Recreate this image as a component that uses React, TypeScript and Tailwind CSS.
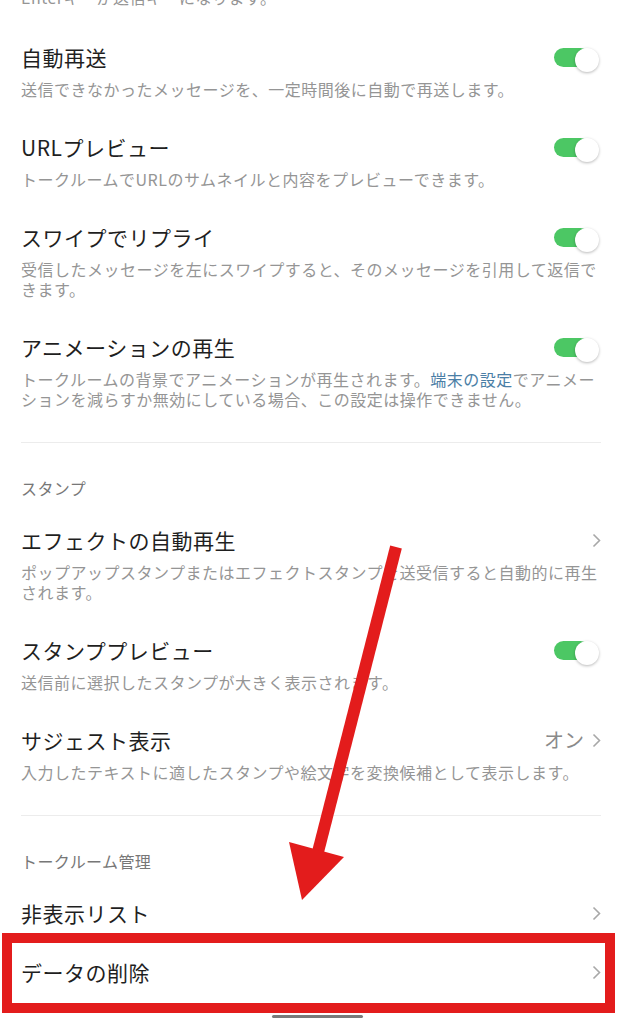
import React from "react";

function Toggle() {
  return (
    <div className="flex items-start h-[28px] mr-[2px] shrink-0">
      <div className="mt-[5px] w-[36px] h-[19px] rounded-full bg-[#4cc764]" />
      <div className="-ml-[15px] mt-[5px] w-[24px] h-[24px] rounded-full bg-white shadow-[0_1px_3px_rgba(0,0,0,0.28)]" />
    </div>
  );
}

function Chevron() {
  return (
    <svg width="9" height="15" viewBox="0 0 9 15" className="shrink-0">
      <polyline points="1.5,1.5 7.5,7.5 1.5,13.5" fill="none" stroke="#a8a8a8" strokeWidth="1.6" />
    </svg>
  );
}

function Item({
  title,
  right,
  children,
}: {
  title: string;
  right?: React.ReactNode;
  children?: React.ReactNode;
}) {
  return (
    <div className={children ? "pt-[17px] pb-[17px]" : "pt-[17px] pb-[14px]"}>
      <div className="flex items-center justify-between">
        <div className="text-[21px] leading-[28px] tracking-[0.5px] text-[#1f1f1f]">{title}</div>
        {right}
      </div>
      {children && (
        <div className="mt-[8px] text-[16px] leading-[20px] tracking-[0.5px] text-[#959595]">
          {children}
        </div>
      )}
    </div>
  );
}

function Header({ children }: { children: React.ReactNode }) {
  return (
    <div className="pt-[35px] pb-[11px] text-[16px] leading-[20px] tracking-[0.4px] text-[#777777]">
      {children}
    </div>
  );
}

export default function App() {
  return (
    <div className="relative w-[622px] h-[1024px] overflow-hidden bg-white font-['Noto_Sans_CJK_JP',sans-serif]">
      <div className="pl-[21px] pr-[21px]">
        <div className="-mt-[13px] pb-[19px] text-[16px] leading-[20px] tracking-[0.5px] text-[#959595]">
          Enterキーが送信キーになります。
        </div>
        <Item title="自動再送" right={<Toggle />}>
          送信できなかったメッセージを、一定時間後に自動で再送します。
        </Item>
        <Item title="URLプレビュー" right={<Toggle />}>
          トークルームでURLのサムネイルと内容をプレビューできます。
        </Item>
        <Item title="スワイプでリプライ" right={<Toggle />}>
          受信したメッセージを左にスワイプすると、そのメッセージを引用して返信できます。
        </Item>
        <Item title="アニメーションの再生" right={<Toggle />}>
          トークルームの背景でアニメーションが再生されます。
          <span className="text-[#4a7ea6]">端末の設定</span>
          でアニメーションを減らすか無効にしている場合、この設定は操作できません。
        </Item>
        <div className="mt-[16px] h-px bg-[#ececec]" />
        <Header>スタンプ</Header>
        <Item title="エフェクトの自動再生" right={<Chevron />}>
          ポップアップスタンプまたはエフェクトスタンプを送受信すると自動的に再生されます。
        </Item>
        <Item title="スタンププレビュー" right={<Toggle />}>
          送信前に選択したスタンプが大きく表示されます。
        </Item>
        <Item
          title="サジェスト表示"
          right={
            <div className="flex items-center gap-[8px]">
              <span className="text-[20px] leading-[28px] text-[#8a8a8a]">オン</span>
              <Chevron />
            </div>
          }
        >
          入力したテキストに適したスタンプや絵文字を変換候補として表示します。
        </Item>
        <div className="mt-[16px] h-px bg-[#ececec]" />
        <Header>トークルーム管理</Header>
        <Item title="非表示リスト" right={<Chevron />} />
        <Item title="データの削除" right={<Chevron />} />
      </div>

      {/* annotation: red box */}
      <div className="absolute left-[2px] top-[933px] w-[613px] h-[80px] border-[10px] border-[#e31c1c]" />

      {/* annotation: red arrow */}
      <svg
        className="absolute inset-0 pointer-events-none"
        width="622"
        height="1024"
        viewBox="0 0 622 1024"
      >
        <line x1="396" y1="547" x2="318" y2="852" stroke="#e31c1c" strokeWidth="12" />
        <polygon points="289,842 344,857 302,900" fill="#e31c1c" />
      </svg>

      {/* home indicator */}
      <div className="absolute left-[272px] bottom-[6px] w-[91px] h-[3px] rounded-full bg-[#7a7a7a]" />
    </div>
  );
}
